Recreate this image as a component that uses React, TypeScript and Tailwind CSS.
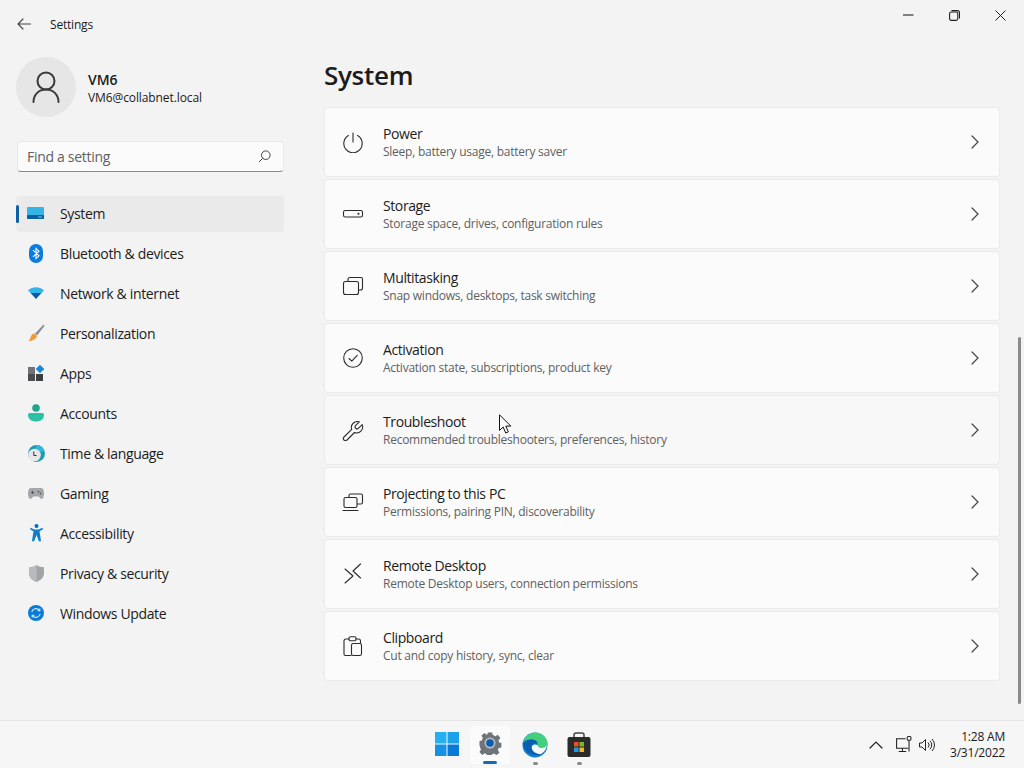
const font = { fontFamily: '"Open Sans", "Noto Sans", sans-serif' };

const Stroke = ({ children, size = 22, className = "text-[#2b2b2b]" }: { children: React.ReactNode; size?: number; className?: string }) => (
  <svg width={size} height={size} viewBox="0 0 22 22" fill="none" stroke="currentColor" strokeWidth="1.1" strokeLinecap="round" strokeLinejoin="round" className={className}>
    {children}
  </svg>
);

const cardIcons: Record<string, React.ReactNode> = {
  power: (
    <Stroke>
      <path d="M11 2v9" />
      <path d="M6.500 4.500a9.200 9.200 0 1 0 9 0" />
    </Stroke>
  ),
  storage: (
    <Stroke>
      <rect x="1.500" y="7.500" width="19" height="6.500" rx="1.800" />
      <circle cx="16.500" cy="10.700" r="0.500" fill="currentColor" />
    </Stroke>
  ),
  multitasking: (
    <Stroke>
      <path d="M6 6.500V4.500a2 2 0 0 1 2-2h11a1.500 1.500 0 0 1 1.500 1.500v9a2 2 0 0 1-2 2h-2" />
      <rect x="1.500" y="6.500" width="15" height="13" rx="2" />
    </Stroke>
  ),
  activation: (
    <Stroke>
      <circle cx="11" cy="11" r="9.300" />
      <path d="M7 11.500l2.800 2.600L15.200 8.400" />
    </Stroke>
  ),
  troubleshoot: (
    <Stroke>
      <path d="M20.200 5.600l-3.600 3.600a2 2 0 0 1-2.900-2.800l3.600-3.600a6 6 0 0 0-7.600 7.600L2 18a2 2 0 0 0 3 3l7.500-7.500a6 6 0 0 0 7.700-7.900z" />
    </Stroke>
  ),
  projecting: (
    <Stroke>
      <rect x="7" y="3" width="13.500" height="10" rx="1.600" />
      <rect x="2" y="6.500" width="13" height="10" rx="1.600" fill="#fbfbfb" />
      <path d="M1 19.500h15" />
    </Stroke>
  ),
  remote: (
    <Stroke>
      <path d="M3 6l8 7-8 7" />
      <path d="M18.500 1l-7.500 7 7.500 7" />
    </Stroke>
  ),
  clipboard: (
    <Stroke>
      <path d="M7 4H4a2 2 0 0 0-2 2v13a1.500 1.500 0 0 0 1.500 1.500H9" />
      <path d="M14 4h2.500a2 2 0 0 1 2 2v2" />
      <rect x="7" y="1.800" width="7" height="4" rx="1.400" />
      <rect x="9.500" y="8.500" width="10" height="12" rx="1.800" />
    </Stroke>
  ),
};

const cards = [
  { icon: "power", title: "Power", sub: "Sleep, battery usage, battery saver" },
  { icon: "storage", title: "Storage", sub: "Storage space, drives, configuration rules" },
  { icon: "multitasking", title: "Multitasking", sub: "Snap windows, desktops, task switching" },
  { icon: "activation", title: "Activation", sub: "Activation state, subscriptions, product key" },
  { icon: "troubleshoot", title: "Troubleshoot", sub: "Recommended troubleshooters, preferences, history", hover: true },
  { icon: "projecting", title: "Projecting to this PC", sub: "Permissions, pairing PIN, discoverability" },
  { icon: "remote", title: "Remote Desktop", sub: "Remote Desktop users, connection permissions" },
  { icon: "clipboard", title: "Clipboard", sub: "Cut and copy history, sync, clear" },
];

const navIcons: Record<string, React.ReactNode> = {
  system: (
    <svg width="18" height="14" viewBox="0 0 18 14">
      <rect x="0" y="1" width="17" height="12" rx="1" fill="#35b4e8" />
      <rect x="0" y="9" width="17" height="4" rx="1" fill="#0a5f9e" />
      <rect x="11" y="10.500" width="4" height="1" fill="#7fc4e8" />
    </svg>
  ),
  bluetooth: (
    <svg width="14" height="19" viewBox="0 0 14 19">
      <rect x="0" y="0" width="14" height="19" rx="7" fill="#0a7ce0" />
      <path d="M4 6.200l6 5.600-3 2.800V4.400l3 2.800-6 5.600" fill="none" stroke="#fff" strokeWidth="1.100" />
    </svg>
  ),
  network: (
    <svg width="16" height="12" viewBox="0 0 16 12">
      <path d="M0 3.500C4.500-.8 11.500-.8 16 3.500L13.500 6H2.500z" fill="#35b4ea" />
      <path d="M2.500 6h11L8 12z" fill="#0a5ca8" />
    </svg>
  ),
  personalization: (
    <svg width="17" height="18" viewBox="0 0 17 18">
      <path d="M15.500 .5L7 9.500l2 2L16.500 2z" fill="#8a8f94" />
      <path d="M6.500 9.500l2.500 2.500c-1 3.500-4.500 5-8.500 5 2-1.500 1.500-3 2.500-5 .8-1.500 2-2.500 3.500-2.500z" fill="#ee9a3a" />
    </svg>
  ),
  apps: (
    <svg width="16" height="16" viewBox="0 0 16 16">
      <rect x="0" y="2" width="7" height="7" fill="#6f7377" />
      <rect x="0" y="9" width="7" height="7" fill="#4a4d50" />
      <rect x="8" y="9" width="7" height="7" fill="#3c3f42" />
      <rect x="9" y="1" width="6" height="6" transform="rotate(45 12 4)" fill="#1a86d8" />
    </svg>
  ),
  accounts: (
    <svg width="16" height="18" viewBox="0 0 16 18">
      <circle cx="8" cy="4" r="3.800" fill="#1fa58f" />
      <path d="M0 11c0-1.500 1-2 2-2h12c1 0 2 .5 2 2 0 4.500-4 6.500-8 6.500S0 15.500 0 11z" fill="#2cc0a5" />
    </svg>
  ),
  time: (
    <svg width="17" height="17" viewBox="0 0 17 17">
      <circle cx="8.500" cy="8.500" r="8.500" fill="#1b9db0" />
      <path d="M8.500 0a8.500 8.500 0 0 1 8 6l-4 1-2-2-3-1z" fill="#34b5dd" />
      <circle cx="6.500" cy="10" r="6.300" fill="#e9e6ea" />
      <path d="M5.800 6.500v4h2.700" fill="none" stroke="#333" strokeWidth="1" />
    </svg>
  ),
  gaming: (
    <svg width="16" height="11" viewBox="0 0 16 11">
      <path d="M3 0h10c2 0 3 2 3 5.500 0 3-1 5.500-2.500 5.500-1.500 0-2-2.500-3-2.500h-5C4.500 8.500 4 11 2.500 11 1 11 0 8.500 0 5.500 0 2 1 0 3 0z" fill="#a3a7ab" />
      <path d="M3 4.500h3M4.500 3v3" stroke="#444" strokeWidth="0.800" />
      <circle cx="10.500" cy="3.800" r="0.800" fill="#444" />
      <circle cx="12.500" cy="5.500" r="0.800" fill="#444" />
    </svg>
  ),
  accessibility: (
    <svg width="13" height="18" viewBox="0 0 13 18">
      <circle cx="6.500" cy="2" r="2" fill="#0a68b8" />
      <path d="M.5 3.800l4 1.700h4l4-1.700.5 1.500L9.500 7.200 11 17l-2 .6L6.500 11 4 17.600 2 17l1.500-9.800L0 5.300z" fill="#0f7cd0" />
    </svg>
  ),
  privacy: (
    <svg width="15" height="17" viewBox="0 0 15 17">
      <path d="M7.500 0c2 1.500 4.500 2.200 7.500 2.300V8c0 4.500-3.500 7.500-7.500 9C3.500 15.500 0 12.500 0 8V2.300C3 2.200 5.500 1.500 7.500 0z" fill="#a0a4a8" />
      <path d="M7.500 0C5.500 1.500 3 2.200 0 2.300V8c0 4.500 3.500 7.500 7.500 9z" fill="#b8bbbe" />
    </svg>
  ),
  update: (
    <svg width="16" height="16" viewBox="0 0 16 16">
      <circle cx="8" cy="8" r="8" fill="#0a7cd8" />
      <path d="M3.800 7a4.300 4.300 0 0 1 7.500-1.800M12.200 9a4.300 4.300 0 0 1-7.500 1.800" fill="none" stroke="#d6f0ff" strokeWidth="1.100" />
      <path d="M11.800 3.500v2.200H9.600M4.200 12.500v-2.200h2.200" fill="none" stroke="#d6f0ff" strokeWidth="1.100" />
    </svg>
  ),
};

const nav = [
  { icon: "system", label: "System", active: true },
  { icon: "bluetooth", label: "Bluetooth & devices" },
  { icon: "network", label: "Network & internet" },
  { icon: "personalization", label: "Personalization" },
  { icon: "apps", label: "Apps" },
  { icon: "accounts", label: "Accounts" },
  { icon: "time", label: "Time & language" },
  { icon: "gaming", label: "Gaming" },
  { icon: "accessibility", label: "Accessibility" },
  { icon: "privacy", label: "Privacy & security" },
  { icon: "update", label: "Windows Update" },
];

const Sidebar = () => (
  <aside className="w-[300px] shrink-0 pl-4 pr-4 pt-[9px]">
    <div className="flex items-center gap-3">
      <div className="w-[60px] h-[60px] rounded-full bg-[#e6e6e6] flex items-center justify-center">
        <svg width="28" height="32" viewBox="0 0 28 32" fill="none" stroke="#3a3a3a" strokeWidth="2" strokeLinecap="round">
          <circle cx="14" cy="10" r="8.500" />
          <path d="M1.500 31c0-7 5-12.500 12.500-12.500S26.500 24 26.500 31" />
        </svg>
      </div>
      <div className="flex flex-col pt-1">
        <span className="text-[14px] leading-[18px] font-semibold text-[#1b1b1b]">VM6</span>
        <span className="text-[12px] leading-[18px] tracking-[-0.1px] text-[#1b1b1b]">VM6@collabnet.local</span>
      </div>
    </div>
    <div className="mt-6 ml-px h-[31px] w-[267px] bg-[#fbfbfb] rounded-[4px] border border-[#e8e8e8] border-b-[#8a8a8a] flex items-center justify-between pl-[9px] pr-3">
      <span className="text-[14px] tracking-[-0.3px] text-[#5f5f5f]">Find a setting</span>
      <svg width="13" height="13" viewBox="0 0 13 13" fill="none" stroke="#444" strokeWidth="1">
        <circle cx="7.800" cy="5.200" r="4.300" />
        <path d="M4.600 8.400L1 12" />
      </svg>
    </div>
    <nav className="mt-6 flex flex-col gap-1">
      {nav.map((item) => (
        <div key={item.label} className={`relative h-9 pb-[2px] rounded-[4px] flex items-center ${item.active ? "bg-[#eaeaea]" : ""}`}>
          {item.active && <div className="absolute left-0 top-[9px] h-[18px] w-[3px] rounded-full bg-[#0f5fa8]" />}
          <div className="w-[44px] pl-[11px] shrink-0 flex items-center justify-start">
            <div className="w-[18px] flex justify-center">{navIcons[item.icon]}</div>
          </div>
          <span className="text-[14px] tracking-[-0.35px] text-[#1b1b1b]">{item.label}</span>
        </div>
      ))}
    </nav>
  </aside>
);

const Card = ({ icon, title, sub, hover }: { icon: string; title: string; sub: string; hover?: boolean }) => (
  <div className={`h-[70px] rounded-[4px] border border-[#ebebeb] flex items-center pl-[17px] pr-5 ${hover ? "bg-[#f8f8f8]" : "bg-[#fbfbfb]"}`}>
    <div className="w-[22px] h-[22px] shrink-0">{cardIcons[icon]}</div>
    <div className="ml-[19px] flex-1 flex flex-col pt-[2px]">
      <span className="text-[14px] leading-[18px] tracking-[-0.4px] text-[#1b1b1b]">{title}</span>
      <span className="text-[12px] leading-[18px] tracking-[-0.25px] text-[#5f5f5f]">{sub}</span>
    </div>
    <svg width="8" height="14" viewBox="0 0 8 14" fill="none" stroke="#444" strokeWidth="1.200" strokeLinecap="round">
      <path d="M1 1l6 6-6 6" />
    </svg>
  </div>
);

const TitleBar = () => (
  <div className="h-12 flex items-start justify-between">
    <div className="h-12 flex items-center pl-[17px] gap-[19px]">
      <svg width="14" height="12" viewBox="0 0 14 12" fill="none" stroke="#444" strokeWidth="1.100" strokeLinecap="round" strokeLinejoin="round">
        <path d="M13.500 6H1M6 1L1 6l5 5" />
      </svg>
      <span className="text-[12px] tracking-[-0.2px] pt-[2px] text-[#1b1b1b]">Settings</span>
    </div>
    <div className="flex items-center h-[31px] pr-[18px] gap-[35px]">
      <svg width="11" height="11" viewBox="0 0 11 11" stroke="#222" strokeWidth="1.100"><path d="M0 5h10.500" /></svg>
      <svg width="11" height="11" viewBox="0 0 11 11" fill="none" stroke="#222" strokeWidth="1.100">
        <rect x="0.600" y="2" width="8.200" height="8.400" rx="1.600" />
        <path d="M2.500.6h6a2 2 0 0 1 2 2v6" />
      </svg>
      <svg width="11" height="11" viewBox="0 0 11 11" fill="none" stroke="#222" strokeWidth="1"><path d="M.5.500l10 10M10.500.500l-10 10" /></svg>
    </div>
  </div>
);

const Taskbar = () => (
  <div className="h-12 bg-[#f6f6f6] border-t border-[#e6e6e6] grid grid-cols-[1fr_auto_1fr] items-center">
    <div />
    <div className="flex items-center">
      <div className="w-11 h-10 pl-[2px] pb-[2px] flex items-center justify-center">
        <svg width="24" height="24" viewBox="0 0 24 24">
          <rect x="0" y="0" width="11.500" height="11.500" fill="#26b0f0" />
          <rect x="12.500" y="0" width="11.500" height="11.500" fill="#1ba2e8" />
          <rect x="0" y="12.500" width="11.500" height="11.500" fill="#1592e4" />
          <rect x="12.500" y="12.500" width="11.500" height="11.500" fill="#0a7ad8" />
        </svg>
      </div>
      <div className="relative w-[40px] mx-[2px] h-[38px] mt-[1px] rounded-[4px] bg-[#fbfbfb] flex items-center justify-center">
        <svg width="24" height="24" viewBox="0 0 24 24" className="-mt-1">
          <path d="M12 12m-8.500 0a8.500 8.500 0 1 0 17 0a8.500 8.500 0 1 0-17 0" fill="#6e7479" />
          <path d="M9.500 0h5l.7 3.500 2.700 1.100 3-2 3 3.700-2.300 2.800.9 2.400 2.500.5v5l-3.100.6-1 2.500 2 2.800-3.600 3-2.500-2-2.500 1-.6 3h-4.700l-.7-3.100-2.500-1-2.600 2-3.300-3.400 1.800-2.600-1-2.700L0 14.600v-5l2.900-.6 1.100-2.700-1.900-2.700 3.400-3.100L8.200 2.500l1-.4z" fill="#6e7479" transform="translate(1.500 1.500) scale(0.875)" />
          <circle cx="12" cy="12" r="5.500" fill="#b8bcc0" />
          <circle cx="12" cy="12" r="3.800" fill="#0b5cad" />
        </svg>
        <div className="absolute bottom-0 left-[13px] h-[3px] w-[14px] rounded-full bg-[#0f6cbd]" />
      </div>
      <div className="relative w-11 h-10 pl-[2px] flex items-center justify-center">
        <svg width="26" height="26" viewBox="0 0 26 26">
          <circle cx="13" cy="13" r="12.500" fill="#0e7fd0" />
          <path d="M1 11C3 4 8 .5 13 .5c7 0 12.500 5 12.500 11 0 3-3 4.500-6 4.500-2 0-3.500-1-3.500-2.500 0-4-3-6-6.500-6C6 7.500 3 8.500 1 11z" fill="#44cf7e" />
          <path d="M1 11c2-2.500 5-3.500 8.500-3.500 3 0 5.500 1.500 6.200 4-3-1-6 .5-6 4 0 4 4 7 9 6.500a12.500 12.500 0 0 1-17.700-11z" fill="#0b5fae" />
          <path d="M16 13.500c0 1.500 1.500 2.500 3.500 2.500 2.500 0 4.500-1.200 5.500-3a12 12 0 0 1-6 9c-4 .3-9.300-2.500-9.300-6.500 0-2.500 3.300-4 6.300-2z" fill="#f6f6f6" />
        </svg>
        <div className="absolute bottom-0 left-[21px] h-[3px] w-[5px] rounded-full bg-[#8a8a8a]" />
      </div>
      <div className="relative w-11 h-10 pl-[2px] flex items-center justify-center">
        <svg width="24" height="26" viewBox="0 0 24 26">
          <path d="M7 6V3a2 2 0 0 1 2-2h6a2 2 0 0 1 2 2v3" fill="none" stroke="#444" strokeWidth="1.500" />
          <rect x="0.500" y="5" width="23" height="20" rx="2" fill="#2b2b2b" />
          <rect x="7" y="10" width="4.500" height="4.500" fill="#e8502a" />
          <rect x="12.500" y="10" width="4.500" height="4.500" fill="#7db82a" />
          <rect x="7" y="15.500" width="4.500" height="4.500" fill="#1a9ce8" />
          <rect x="12.500" y="15.500" width="4.500" height="4.500" fill="#f6b81a" />
        </svg>
        <div className="absolute bottom-0 left-[21px] h-[3px] w-[5px] rounded-full bg-[#8a8a8a]" />
      </div>
    </div>
    <div className="flex items-center justify-end pr-[19px]">
      <svg width="14" height="8" viewBox="0 0 14 8" fill="none" stroke="#222" strokeWidth="1.200" strokeLinecap="round"><path d="M1 7l6-6 6 6" /></svg>
      <svg width="17" height="17" viewBox="0 0 16 16" fill="none" stroke="#222" strokeWidth="1" className="ml-[12px]">
        <path d="M10 2.500H1.500v9h11M7 11.500v3M3.500 14.500h7" />
        <rect x="11.500" y="0.500" width="3.500" height="3.500" rx="1" />
        <path d="M13.200 4v10.500" />
      </svg>
      <svg width="16" height="14" viewBox="0 0 16 14" fill="none" stroke="#222" strokeWidth="1" className="ml-[7px]">
        <path d="M.5 5h2.500L6.500 1.500v11L3 9H.5zM9 4.500a3.500 3.500 0 0 1 0 5M11 2.800a6 6 0 0 1 0 8.400M13 1a8.500 8.500 0 0 1 0 12" />
      </svg>
      <div className="ml-[15px] flex flex-col items-end text-[12px] leading-4 tracking-[-0.2px] text-[#1b1b1b]">
        <span>1:28 AM</span>
        <span>3/31/2022</span>
      </div>
    </div>
  </div>
);

export default function App() {
  return (
    <div className="relative h-[768px] w-[1024px] overflow-hidden bg-[#f3f3f3] flex flex-col" style={font}>
      <TitleBar />
      <div className="flex-1 flex min-h-0">
        <Sidebar />
        <main className="pl-6 w-[700px]">
          <h1 className="text-[26px] leading-9 font-semibold text-[#1b1b1b] mt-[9px] mb-[14px] tracking-[-0.3px]">System</h1>
          <div className="flex flex-col gap-[2px]">
            {cards.map((c) => (
              <Card key={c.icon} {...c} />
            ))}
          </div>
        </main>
      </div>
      <Taskbar />
      {/* scrollbar thumb + mouse pointer sit on top of the page */}
      <div className="absolute left-[1018px] top-[337px] h-[367px] w-[3px] rounded-full bg-[#8a8a8a]" />
      <svg className="absolute left-[499px] top-[414px]" width="13" height="20" viewBox="0 0 13 20">
        <path d="M.5.800v15.600l3.700-3.400 2.500 6 2.600-1.100-2.500-5.800h5z" fill="#fff" stroke="#111" strokeWidth="1" strokeLinejoin="round" />
      </svg>
    </div>
  );
}
